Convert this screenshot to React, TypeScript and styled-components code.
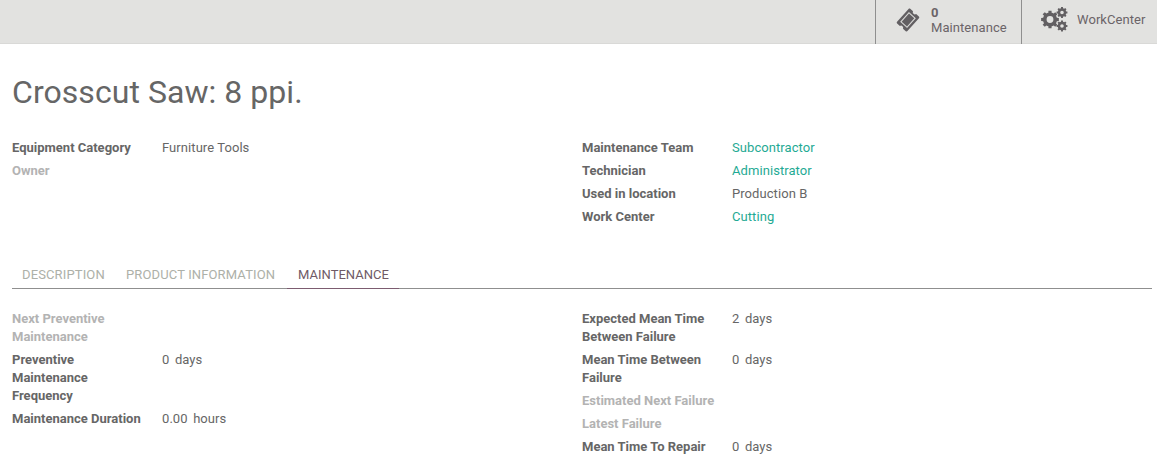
import React from "react";
import styled, { createGlobalStyle } from "styled-components";

const Global = createGlobalStyle`
  html, body { margin: 0; padding: 0; background: #fff; }
  body { font-family: Roboto, "Noto Sans", sans-serif; font-size: 13px; color: #666; line-height: 18px; letter-spacing: 0.07px; }
`;
const Page = styled.div`width: 1157px; height: 461px; overflow: hidden;`;
const ButtonBox = styled.div`
  height: 43px; background: #e2e2e0; border-bottom: 1px solid #d9d9d7;
  display: flex; justify-content: flex-end;
`;
const StatButton = styled.div<{ $w: number }>`
  width: ${(p) => p.$w}px; box-sizing: border-box; height: 44px; border-left: 1px solid #8f8f8f;
  padding-bottom: 5px;
  display: flex; align-items: center; color: #6b6468; line-height: 15px;
`;
const IconWrap = styled.span<{ $ml: number; $w: number }>`
  margin-left: ${(p) => p.$ml}px; width: ${(p) => p.$w}px; display: flex; align-items: center; color: #625f62;
`;
const StatText = styled.div`display: flex; flex-direction: column;`;
const StatValue = styled.span`font-weight: 700;`;
const Sheet = styled.div`padding: 0 5px 0 12px;`;
const Title = styled.h1`
  margin: 0; padding-top: 27px; height: 68px; font-size: 32px; line-height: 42px; font-weight: 400; color: #666; letter-spacing: 0.05px;
`;
const Columns = styled.div`display: grid; grid-template-columns: 570px 1fr;`;
const Group = styled.div`display: flex; flex-direction: column; gap: 5px;`;
const Row = styled.div`display: grid; grid-template-columns: 150px 1fr;`;
const Label = styled.div<{ $muted?: boolean }>`
  font-weight: 700; letter-spacing: 0; color: ${(p) => (p.$muted ? "#b3b3b3" : "#666")}; padding-right: 16px;
`;
const Value = styled.div``;
const Link = styled.span`color: #1faa94;`;
const Unit = styled.span`margin-left: 5.5px;`;
const Tabs = styled.div`
  display: flex; margin-top: 38px; height: 24px; border-bottom: 1px solid #8f8f8f;
`;
const Tab = styled.div<{ $active?: boolean; $w: number }>`
  width: ${(p) => p.$w}px; box-sizing: border-box; height: 25px; line-height: 20px; padding-top: 1px;
  padding-left: ${(p) => (p.$active ? 11 : 10)}px;
  letter-spacing: ${(p) => (p.$active ? "0.02px" : "0.13px")};
  color: ${(p) => (p.$active ? "#6f5a66" : "#adb0a8")};
  border-bottom: 1px solid ${(p) => (p.$active ? "#7c5c70" : "transparent")};
`;
const TabBody = styled(Columns)`margin-top: 21px;`;

function TicketIcon() {
  return (
    <svg width="24" height="24" viewBox="0 0 24 24" fill="currentColor">
      <g transform="rotate(-48 12 12)">
        <path d="M3.4 5h17.2c.7 0 1.2.5 1.2 1.2v3.7a2.2 2.2 0 0 0 0 4.2v3.7c0 .7-.5 1.2-1.2 1.2H3.4c-.7 0-1.2-.5-1.2-1.2v-3.7a2.2 2.2 0 0 0 0-4.2V6.200C2.200 5.500 2.700 5 3.400 5z" />
        <rect x="6" y="7.900" width="12" height="8.200" fill="none" stroke="#d8d8d6" strokeWidth="1.100" />
      </g>
    </svg>
  );
}

const gear = (cx: number, cy: number, r: number, hole: number, teeth: number) => {
  let d = "";
  const inner = r * 0.78;
  const step = (Math.PI * 2) / teeth;
  for (let i = 0; i < teeth; i++) {
    const a = i * step;
    const pts = [
      [inner, a - step * 0.5],
      [inner, a - step * 0.3],
      [r, a - step * 0.22],
      [r, a + step * 0.22],
      [inner, a + step * 0.3],
    ];
    pts.forEach(([rad, ang], j) => {
      const x = (cx + rad * Math.cos(ang)).toFixed(2);
      const y = (cy + rad * Math.sin(ang)).toFixed(2);
      d += `${i === 0 && j === 0 ? "M" : "L"}${x} ${y}`;
    });
  }
  d += "Z";
  d += `M${cx - hole} ${cy}a${hole} ${hole} 0 1 0 ${hole * 2} 0a${hole} ${hole} 0 1 0 ${-hole * 2} 0Z`;
  return d;
};

function CogsIcon() {
  return (
    <svg width="27" height="25" viewBox="0 0 27 25" fill="currentColor">
      <path fillRule="evenodd" d={gear(9, 12.5, 9, 3.4, 8)} />
      <path fillRule="evenodd" d={gear(21, 5.5, 5.5, 1.8, 8)} />
      <path fillRule="evenodd" d={gear(21, 19, 5.5, 1.8, 8)} />
    </svg>
  );
}

function Field({ label, muted, children }: { label: string; muted?: boolean; children?: React.ReactNode }) {
  return (
    <Row>
      <Label $muted={muted}>{label}</Label>
      <Value>{children}</Value>
    </Row>
  );
}

export default function App() {
  return (
    <Page>
      <Global />
      <ButtonBox>
        <StatButton $w={146}>
          <IconWrap $ml={20} $w={35}><TicketIcon /></IconWrap>
          <StatText><StatValue>0</StatValue><span>Maintenance</span></StatText>
        </StatButton>
        <StatButton $w={136}>
          <IconWrap $ml={19} $w={36}><CogsIcon /></IconWrap>
          <span>WorkCenter</span>
        </StatButton>
      </ButtonBox>
      <Sheet>
        <Title>Crosscut Saw: 8 ppi.</Title>
        <Columns>
          <Group>
            <Field label="Equipment Category">Furniture Tools</Field>
            <Field label="Owner" muted />
          </Group>
          <Group>
            <Field label="Maintenance Team"><Link>Subcontractor</Link></Field>
            <Field label="Technician"><Link>Administrator</Link></Field>
            <Field label="Used in location">Production B</Field>
            <Field label="Work Center"><Link>Cutting</Link></Field>
          </Group>
        </Columns>
        <Tabs>
          <Tab $w={104}>DESCRIPTION</Tab>
          <Tab $w={171}>PRODUCT INFORMATION</Tab>
          <Tab $active $w={112}>MAINTENANCE</Tab>
        </Tabs>
        <TabBody>
          <Group>
            <Field label="Next Preventive Maintenance" muted />
            <Field label="Preventive Maintenance Frequency">0<Unit>days</Unit></Field>
            <Field label="Maintenance Duration">0.00<Unit>hours</Unit></Field>
          </Group>
          <Group>
            <Field label="Expected Mean Time Between Failure">2<Unit>days</Unit></Field>
            <Field label="Mean Time Between Failure">0<Unit>days</Unit></Field>
            <Field label="Estimated Next Failure" muted />
            <Field label="Latest Failure" muted />
            <Field label="Mean Time To Repair">0<Unit>days</Unit></Field>
          </Group>
        </TabBody>
      </Sheet>
    </Page>
  );
}
